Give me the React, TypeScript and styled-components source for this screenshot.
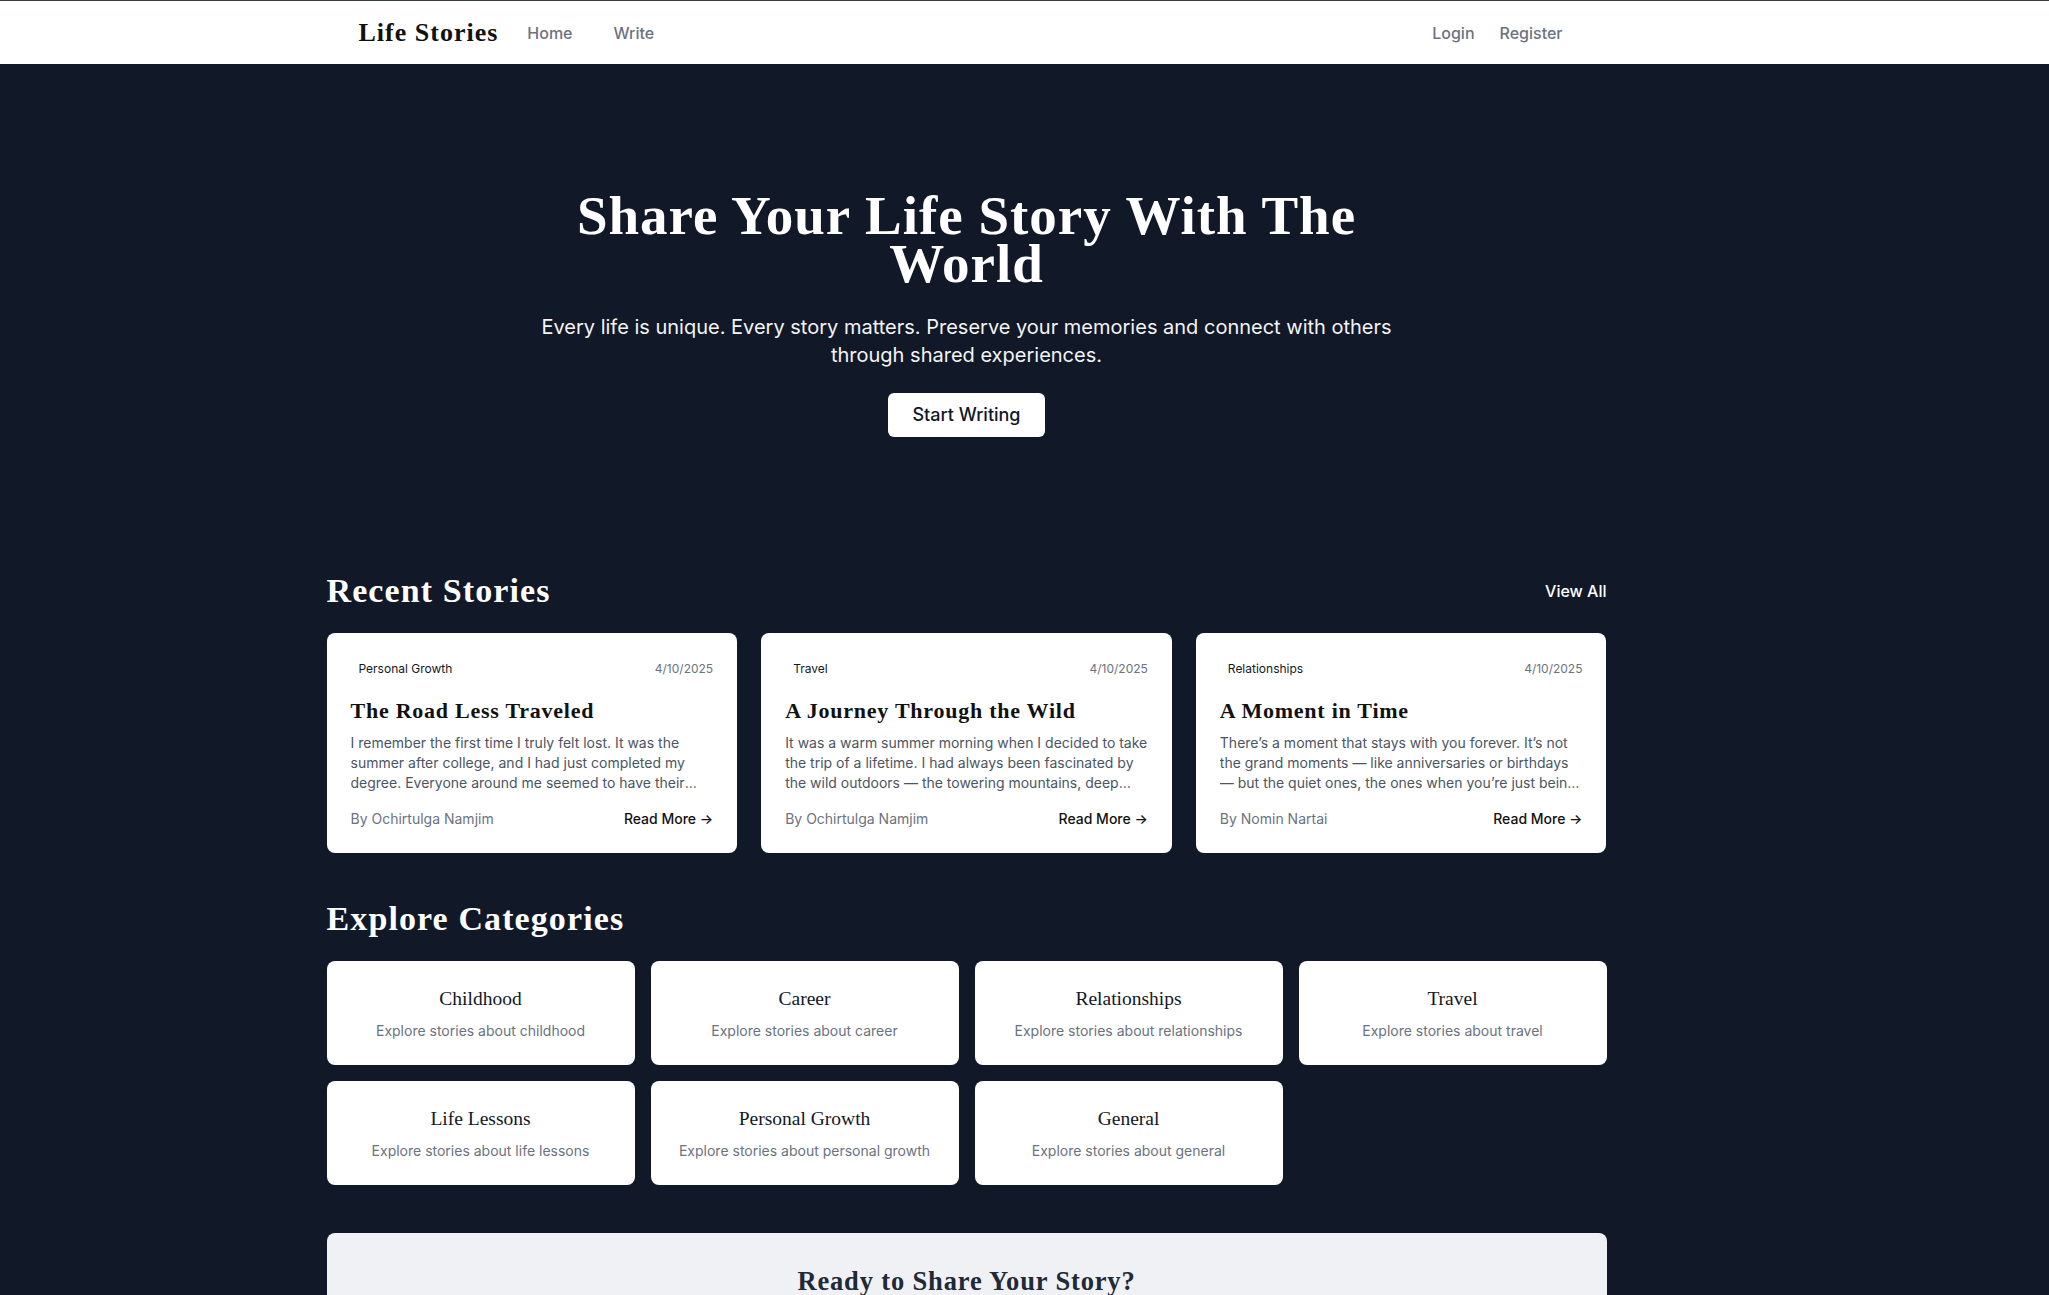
import React from "react";
import styled, { createGlobalStyle } from "styled-components";

const GlobalStyle = createGlobalStyle`
  html, body {
    margin: 0;
    padding: 0;
  }
  body {
    background: #111827;
    font-family: Inter, "Noto Sans", "Liberation Sans", sans-serif;
    color: #111827;
    -webkit-font-smoothing: antialiased;
  }
  * { box-sizing: border-box; }
`;

const serif = `Georgia, "Liberation Serif", "Times New Roman", serif`;

const Page = styled.div`
  min-height: 100vh;
  background: #111827;
`;

const NavBar = styled.header`
  background: #ffffff;
  border-top: 1px solid #3a3f46;
  height: 64px;
  padding-right: 116px;
`;

const NavInner = styled.nav`
  max-width: 1280px;
  height: 100%;
  margin: 0 auto;
  padding: 0 32px;
  display: flex;
  align-items: center;
  justify-content: space-between;
`;

const NavGroup = styled.div<{ $gap: number }>`
  display: flex;
  align-items: center;
  gap: ${(p) => p.$gap}px;
`;

const Logo = styled.a`
  font-family: ${serif};
  font-weight: 700;
  font-size: 26px;
  letter-spacing: 1px;
  line-height: 32px;
  color: #111111;
  text-decoration: none;
  margin-right: 17px;
`;

const NavLink = styled.a`
  padding: 8px 12px;
  font-size: 16px;
  line-height: 24px;
  font-weight: 500;
  color: #6b7280;
  text-decoration: none;
`;

const Hero = styled.section`
  padding: 128px 116px 136px 0;
`;

const HeroInner = styled.div`
  max-width: 896px;
  margin: 0 auto;
  text-align: center;
  display: flex;
  flex-direction: column;
  align-items: center;
`;

const HeroTitle = styled.h1`
  margin: 0 0 25px;
  font-family: ${serif};
  font-weight: 700;
  font-size: 55px;
  letter-spacing: 1px;
  line-height: 48px;
  color: #ffffff;
`;

const HeroText = styled.p`
  margin: 0 0 24px;
  font-size: 20px;
  line-height: 28px;
  color: #f3f4f6;
`;

const PrimaryButton = styled.a`
  display: inline-block;
  padding: 8px 24px;
  border-radius: 6px;
  background: #ffffff;
  color: #111827;
  font-size: 18px;
  line-height: 28px;
  font-weight: 500;
  text-decoration: none;
`;

const Main = styled.main`
  padding-right: 116px;
`;

const Container = styled.div`
  max-width: 1280px;
  margin: 0 auto;
`;

const Section = styled.section<{ $top?: number }>`
  margin-top: ${(p) => p.$top ?? 0}px;
`;

const SectionHeader = styled.div`
  display: flex;
  align-items: center;
  justify-content: space-between;
  margin-bottom: 24px;
`;

const SectionTitle = styled.h2`
  margin: 0;
  font-family: ${serif};
  font-weight: 700;
  font-size: 34px;
  letter-spacing: 1.1px;
  line-height: 36px;
  color: #ffffff;
`;

const ViewAll = styled.a`
  font-size: 16px;
  line-height: 24px;
  font-weight: 500;
  color: #ffffff;
  text-decoration: none;
`;

const StoryGrid = styled.div`
  display: grid;
  grid-template-columns: repeat(3, 1fr);
  gap: 24px;
`;

const StoryCard = styled.article`
  background: #ffffff;
  border-radius: 8px;
  padding: 24px;
  display: flex;
  flex-direction: column;
`;

const CardTop = styled.div`
  display: flex;
  align-items: center;
  justify-content: space-between;
`;

const Tag = styled.span`
  padding: 4px 8px;
  font-size: 12px;
  line-height: 16px;
  font-weight: 400;
  color: #111827;
`;

const DateText = styled.span`
  font-size: 12px;
  line-height: 16px;
  color: #6b7280;
`;

const StoryTitle = styled.h3`
  margin: 16px 0 0;
  font-family: ${serif};
  font-weight: 700;
  font-size: 22px;
  letter-spacing: 0.75px;
  line-height: 28px;
  color: #111111;
`;

const Excerpt = styled.p`
  margin: 8px 0 0;
  font-size: 14px;
  line-height: 20px;
  color: #4b5563;
  display: -webkit-box;
  -webkit-line-clamp: 3;
  -webkit-box-orient: vertical;
  overflow: hidden;
`;

const CardFooter = styled.div`
  margin-top: 16px;
  display: flex;
  align-items: center;
  justify-content: space-between;
  font-size: 14px;
  line-height: 20px;
`;

const Author = styled.span`
  color: #6b7280;
`;

const ReadMore = styled.a`
  color: #111111;
  font-weight: 500;
  text-decoration: none;
`;

const CategoryGrid = styled.div`
  display: grid;
  grid-template-columns: repeat(4, 1fr);
  gap: 16px;
`;

const CategoryCard = styled.a`
  background: #ffffff;
  border-radius: 8px;
  padding: 24px;
  text-align: center;
  text-decoration: none;
  display: block;
`;

const CategoryName = styled.h3`
  margin: 0;
  font-family: ${serif};
  font-weight: 400;
  font-size: 19.5px;
  line-height: 28px;
  color: #111827;
`;

const CategoryDesc = styled.p`
  margin: 8px 0 0;
  font-size: 14px;
  line-height: 20px;
  color: #6b7280;
`;

const CtaBox = styled.section`
  margin-top: 48px;
  margin-bottom: 48px;
  background: #f0f1f5;
  border-radius: 8px;
  padding: 32px;
  text-align: center;
`;

const CtaTitle = styled.h2`
  margin: 0 0 16px;
  font-family: ${serif};
  font-weight: 700;
  font-size: 26.5px;
  letter-spacing: 0.85px;
  line-height: 32px;
  color: #1f2937;
`;

const CtaText = styled.p`
  margin: 0 auto 24px;
  max-width: 672px;
  font-size: 16px;
  line-height: 24px;
  color: #4b5563;
`;

const DarkButton = styled.a`
  display: inline-block;
  padding: 8px 24px;
  border-radius: 6px;
  background: #111827;
  color: #ffffff;
  font-size: 16px;
  line-height: 24px;
  font-weight: 500;
  text-decoration: none;
`;

const stories = [
  {
    tag: "Personal Growth",
    date: "4/10/2025",
    title: "The Road Less Traveled",
    excerpt:
      "I remember the first time I truly felt lost. It was the summer after college, and I had just completed my degree. Everyone around me seemed to have their lives figured out, and I was still searching for mine.",
    author: "Ochirtulga Namjim",
  },
  {
    tag: "Travel",
    date: "4/10/2025",
    title: "A Journey Through the Wild",
    excerpt:
      "It was a warm summer morning when I decided to take the trip of a lifetime. I had always been fascinated by the wild outdoors \u2014 the towering mountains, deep forests, and endless rivers.",
    author: "Ochirtulga Namjim",
  },
  {
    tag: "Relationships",
    date: "4/10/2025",
    title: "A Moment in Time",
    excerpt:
      "There\u2019s a moment that stays with you forever. It\u2019s not the grand moments \u2014 like anniversaries or birthdays \u2014 but the quiet ones, the ones when you\u2019re just being yourself with someone you love.",
    author: "Nomin Nartai",
  },
];

const categories = [
  "Childhood",
  "Career",
  "Relationships",
  "Travel",
  "Life Lessons",
  "Personal Growth",
  "General",
];

export default function App() {
  return (
    <>
      <GlobalStyle />
      <Page>
        <NavBar>
          <NavInner>
            <NavGroup $gap={0}>
              <Logo href="#">Life Stories</Logo>
              <NavGroup $gap={17}>
                <NavLink href="#">Home</NavLink>
                <NavLink href="#">Write</NavLink>
              </NavGroup>
            </NavGroup>
            <NavGroup $gap={1}>
              <NavLink href="#">Login</NavLink>
              <NavLink href="#">Register</NavLink>
            </NavGroup>
          </NavInner>
        </NavBar>

        <Hero>
          <HeroInner>
            <HeroTitle>Share Your Life Story With The World</HeroTitle>
            <HeroText>
              Every life is unique. Every story matters. Preserve your memories and
              connect with others through shared experiences.
            </HeroText>
            <PrimaryButton href="#">Start Writing</PrimaryButton>
          </HeroInner>
        </Hero>

        <Main>
          <Container>
            <Section>
              <SectionHeader>
                <SectionTitle>Recent Stories</SectionTitle>
                <ViewAll href="#">View All</ViewAll>
              </SectionHeader>
              <StoryGrid>
                {stories.map((s) => (
                  <StoryCard key={s.title}>
                    <CardTop>
                      <Tag>{s.tag}</Tag>
                      <DateText>{s.date}</DateText>
                    </CardTop>
                    <StoryTitle>{s.title}</StoryTitle>
                    <Excerpt>{s.excerpt}</Excerpt>
                    <CardFooter>
                      <Author>By {s.author}</Author>
                      <ReadMore href="#">Read More →</ReadMore>
                    </CardFooter>
                  </StoryCard>
                ))}
              </StoryGrid>
            </Section>

            <Section $top={48}>
              <SectionHeader>
                <SectionTitle>Explore Categories</SectionTitle>
              </SectionHeader>
              <CategoryGrid>
                {categories.map((c) => (
                  <CategoryCard key={c} href="#">
                    <CategoryName>{c}</CategoryName>
                    <CategoryDesc>Explore stories about {c.toLowerCase()}</CategoryDesc>
                  </CategoryCard>
                ))}
              </CategoryGrid>
            </Section>

            <CtaBox>
              <CtaTitle>Ready to Share Your Story?</CtaTitle>
              <CtaText>
                Join our community and preserve your memories for future generations.
              </CtaText>
              <DarkButton href="#">Get Started</DarkButton>
            </CtaBox>
          </Container>
        </Main>
      </Page>
    </>
  );
}
